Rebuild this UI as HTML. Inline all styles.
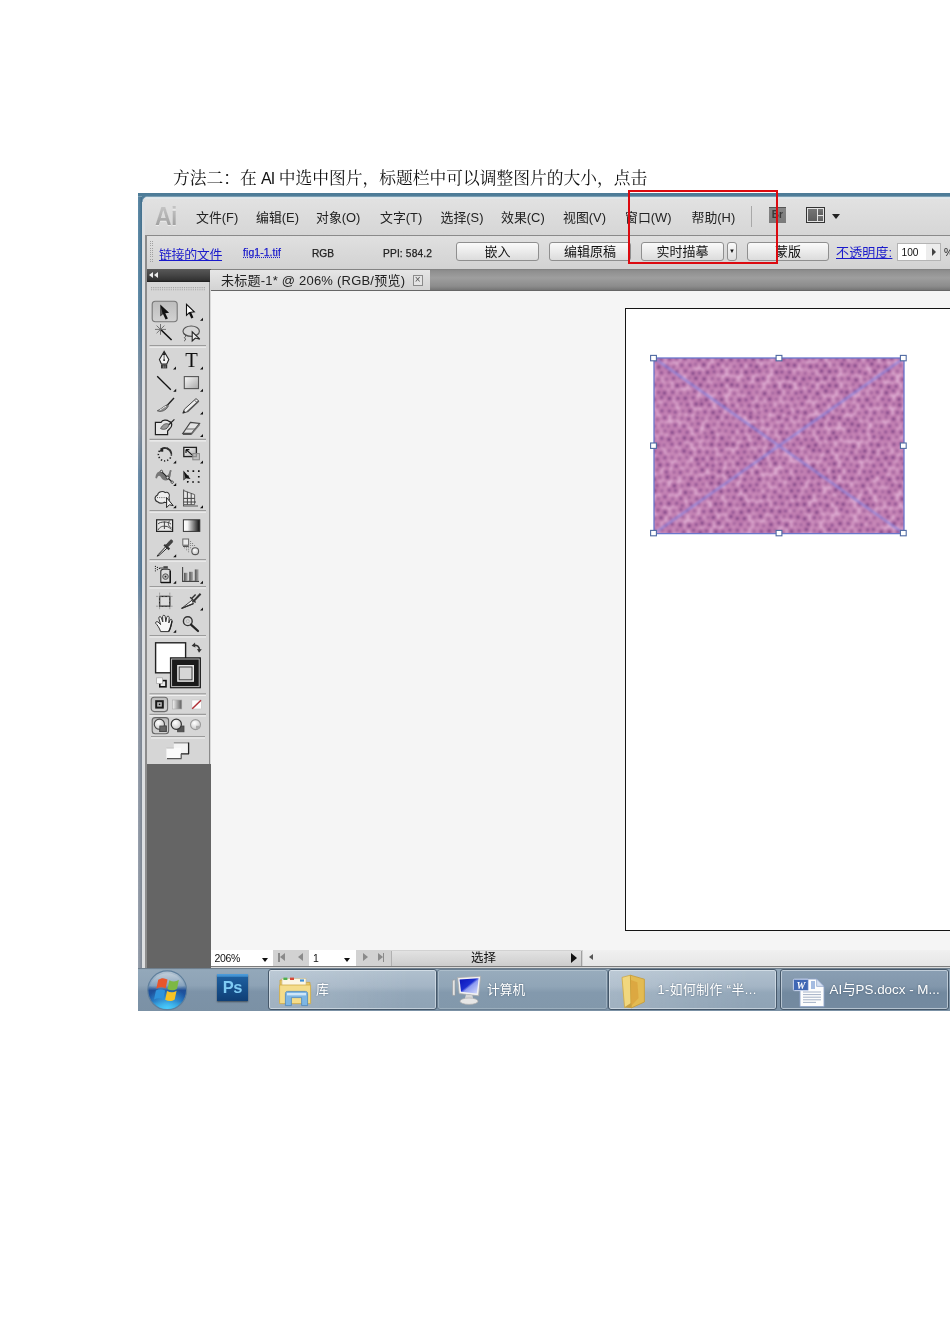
<!DOCTYPE html>
<html lang="zh-CN">
<head>
<meta charset="utf-8">
<title>AI与PS</title>
<style>
*{margin:0;padding:0;box-sizing:border-box}
html,body{width:950px;height:1344px;background:#fff;overflow:hidden}
body{position:relative;font-family:"Liberation Sans","Noto Sans CJK SC",sans-serif;color:#000}
.abs{position:absolute}
#para{will-change:transform;left:172.5px;top:167.4px;font-family:"Liberation Serif","Noto Serif CJK SC",serif;font-size:16.75px;line-height:24px;white-space:nowrap;color:#111}
#para .lat{font-family:"Liberation Sans",sans-serif;font-size:16px;letter-spacing:-.8px}
#shot{left:138px;top:193px;width:812px;height:818px;overflow:hidden;background:#d9d9d9;filter:blur(.42px)}
#shot .abs{position:absolute}
/* all coords inside #shot are relative to (138,193) */
#frameL{left:0;top:3.6px;width:7.2px;height:771.4px;background:linear-gradient(90deg,rgba(255,255,255,.12) 0,rgba(0,0,0,.1) 3.8px,#dcdfe2 4px,#dedfe1 7.2px),linear-gradient(180deg,#4a7c9c 0,#4f7f9f 14%,#8490a0 26%,#8a94a2 30%,#5f84a3 36%,#5a80a0 50%,#8892a0 56%,#8d97a5 100%)}
#frameL2{left:7.2px;top:42px;width:1.6px;height:733px;background:#8c8c8c}
#frameT{left:0;top:0;width:812px;height:6px;background:linear-gradient(180deg,#4c7b97 0,#4f7e9a 55%,#dbe5ea 66%,#e2e8ea 100%)}
#menubar{left:5px;top:4px;width:807px;height:38px;background:linear-gradient(180deg,#e2e2e2,#d6d6d6)}
.mi{position:absolute;top:13px;font-size:12.9px;line-height:16px;white-space:nowrap;color:#222}
#ctrl{left:8px;top:42px;width:804px;height:34px;background:linear-gradient(180deg,#e0e0e0,#d2d2d2);border-top:1px solid #8a8a8a;border-left:1px solid #8a8a8a}
.btn{position:absolute;top:49px;height:19px;border:1px solid #8f8f8f;border-radius:3px;background:linear-gradient(180deg,#fafafa,#dcdcdc);font-size:13px;line-height:18px;text-align:center;color:#111}
.lnk{color:#1a1acc;text-decoration:underline}
#darkbar{left:8px;top:76px;width:804px;height:12.6px;background:linear-gradient(180deg,#585858 0,#444 50%,#333 85%,#1c1c1c 100%)}
#tabstrip{left:73px;top:76px;width:739px;height:21.5px;background:linear-gradient(180deg,#7e7e7e 0,#8e8e8e 8%,#9e9e9e 40%,#8c8c8c 78%,#707070 100%)}
#tab{left:72px;top:76.5px;width:220px;height:21px;letter-spacing:.22px;background:linear-gradient(180deg,#e6e6e6,#d2d2d2);font-size:13px;line-height:21.5px;padding-left:11px;color:#222;white-space:nowrap}
#tools{left:8px;top:88.5px;width:64px;height:482.5px;background:#d6d6d6;border-right:1px solid #8a8a8a}
#toolsdark{left:8px;top:571px;width:64.5px;height:204px;background:#656565}
#canvas{left:72.5px;top:97px;width:740px;height:660px;background:#f5f5f5;border-top:1px solid #666}
#artboard{left:486.8px;top:114.8px;width:340px;height:623px;background:#fff;border:1.5px solid #151515}
#status{left:72.5px;top:756.8px;width:740px;height:17.5px;background:#d2d2d2;border-bottom:1.6px solid #7c7c7c}
.tdn{width:0;height:0;border:3.6px solid transparent;border-top:4.2px solid #111;border-bottom:0}
.nav{height:10px;white-space:nowrap;font-size:0}
.nav i{display:inline-block;vertical-align:top}
.nav .bar{width:1.5px;height:9px;background:#8a8a8a}
.nav .tl{width:0;height:0;border:4.5px solid transparent;border-right:5px solid #8a8a8a;border-left:0}
.nav .tr{width:0;height:0;border:4.5px solid transparent;border-left:5px solid #8a8a8a;border-right:0}
#ailogo{left:11.5px;top:5px;font-size:25.5px;line-height:28px;font-weight:bold;letter-spacing:-.5px;color:#b0b0b0;filter:drop-shadow(0 1px 0 #ececec);transform:scaleX(.9);transform-origin:left center;background:linear-gradient(180deg,#c2c2c2 20%,#a0a0a0 85%);-webkit-background-clip:text;background-clip:text;-webkit-text-fill-color:transparent}
#bricon{left:625.5px;top:10px;width:17.5px;height:15.5px;background:linear-gradient(180deg,#858585,#7a7a7a);border-top:1px solid #555;color:#3a3a3a;font-size:10px;line-height:14px;text-align:center;font-weight:bold}
#layicon{left:663px;top:10px;width:19px;height:16px;background:#e4e4e4;border:1px solid #333}
#layicon i{position:absolute;background:linear-gradient(180deg,#757575,#5e5e5e)}
#layicon i:nth-child(1){left:1px;top:1px;width:8.5px;height:12px}
#layicon i:nth-child(2){left:10.5px;top:1px;width:5.5px;height:5.5px}
#layicon i:nth-child(3){left:10.5px;top:7.5px;width:5.5px;height:5.5px}
#grip1{left:12px;top:48px;width:3.4px;height:22px;background:repeating-linear-gradient(180deg,#a0a0a0 0 1px,transparent 1px 2.2px);-webkit-mask:linear-gradient(90deg,#000 0 1.1px,transparent 1.1px 2.3px,#000 2.3px);mask:linear-gradient(90deg,#000 0 1.1px,transparent 1.1px 2.3px,#000 2.3px)}
#taskbar{left:0;top:774.6px;width:812px;height:43px;background:linear-gradient(180deg,#5e6d7a 0,#93a8ba 1.6px,#8ea3b6 40%,#7d93a8 55%,#7b91a5 100%);overflow:hidden}
#psicon{left:78.5px;top:6.6px;width:31.5px;height:27.2px;background:linear-gradient(180deg,#4f9edc 0,#3d8ccc 2.4px,#1d5e9e 3px,#0f3f76 100%);box-shadow:0 1px 1.5px rgba(0,0,0,.45);text-align:center;line-height:27px}
#psicon b{font-size:16.5px;color:#7fcbf4;letter-spacing:-.5px;font-weight:bold}
.tb{position:absolute;top:1.6px;height:40.6px;border-radius:3px;border:1px solid #46586a;box-shadow:inset 0 0 0 1px rgba(235,242,248,.55)}
.tb1{background:linear-gradient(90deg,rgba(255,255,255,.16),rgba(255,255,255,0) 85%),linear-gradient(180deg,#b0c0ce 0,#a4b5c5 42%,#93a7b9 58%,#8fa3b5 100%)}
.tb2{background:linear-gradient(180deg,#98acbd 0,#90a5b7 42%,#8399ad 58%,#8298ab 100%);border-color:#6a7f92;box-shadow:inset 0 0 0 1px rgba(235,242,248,.25)}
.tb3{background:linear-gradient(180deg,#8a9fb3 0,#8297ac 42%,#72899f 58%,#748aa0 100%)}
.tt{position:absolute;top:12px;font-size:12.8px;line-height:16px;color:#fff;white-space:nowrap;text-shadow:0 0 2px rgba(40,60,80,.6)}
</style>
</head>
<body>
<div id="para" class="abs">方法二：在 <span class="lat">AI</span> 中选中图片，标题栏中可以调整图片的大小，点击</div>

<div id="shot" class="abs">
  <div id="menubar" class="abs">
    <span class="abs" id="ailogo">Ai</span>
    <span class="mi" style="left:53px">文件(F)</span><span class="mi" style="left:113px">编辑(E)</span><span class="mi" style="left:173px">对象(O)</span><span class="mi" style="left:237px">文字(T)</span><span class="mi" style="left:297.5px">选择(S)</span><span class="mi" style="left:358px">效果(C)</span><span class="mi" style="left:420px">视图(V)</span><span class="mi" style="left:482px">窗口(W)</span><span class="mi" style="left:548.5px">帮助(H)</span>
    <span class="abs" style="left:607.5px;top:9px;width:1.5px;height:21px;background:#a8a8a8"></span>
    <span class="abs" id="bricon">Br</span>
    <span class="abs" id="layicon"><i></i><i></i><i></i></span>
    <span class="abs" style="left:688.5px;top:16.5px;width:0;height:0;border:4px solid transparent;border-top:5px solid #222;border-bottom:0"></span>
  </div>
  <div id="ctrl" class="abs"></div>
  <span class="abs" id="grip1"></span>
  <span class="abs lnk" style="left:21px;top:53.5px;font-size:13px;line-height:16px;letter-spacing:-.4px">链接的文件</span>
  <span class="abs lnk" style="left:105px;top:53px;font-size:10.4px;line-height:14px;text-decoration-style:dotted;letter-spacing:.1px;-webkit-text-stroke:.25px #1a1acc">fig1-1.tif</span>
  <span class="abs" style="left:174px;top:54px;font-size:10.2px;line-height:14px;color:#222;-webkit-text-stroke:.25px #222">RGB</span>
  <span class="abs" style="left:245px;top:54px;font-size:10.2px;line-height:14px;color:#222;letter-spacing:.15px;-webkit-text-stroke:.25px #222">PPI: 584.2</span>
  <span class="btn" style="left:318px;width:83px">嵌入</span>
  <span class="btn" style="left:411px;width:82px">编辑原稿</span>
  <span class="btn" style="left:503px;width:83px">实时描摹</span>
  <span class="btn" style="left:589px;width:10px;font-size:6px;line-height:16px">▼</span>
  <span class="btn" style="left:609px;width:82px">蒙版</span>
  <span class="abs lnk" style="left:698px;top:52px;font-size:13px;line-height:16px;letter-spacing:.15px">不透明度:</span>
  <span class="abs" style="left:758.5px;top:49.5px;width:44.5px;height:18.5px;background:linear-gradient(90deg,#fff 0,#fff 27.5px,#ededed 28px);border:1px solid #b4b4b4;font-size:10.2px;line-height:17px;padding-left:4px;color:#111">100</span>
  <span class="abs" style="left:793.5px;top:54.5px;width:0;height:0;border:4px solid transparent;border-left:4.5px solid #444;border-right:0"></span>
  <span class="abs" style="left:806px;top:52px;font-size:10.5px;line-height:14px;color:#222">%</span>
  <div id="darkbar" class="abs"></div>
  <div id="tabstrip" class="abs"></div>
  <div id="tab" class="abs">未标题-1* @ 206% (RGB/预览)<span class="abs" style="left:202.5px;top:5.5px;width:10.5px;height:10.5px;border:1px solid #8a8a8a;background:#e4e4e4;font-size:10px;line-height:8.5px;text-align:center;color:#555;letter-spacing:0">×</span></div>
  <div id="tools" class="abs"></div>
  <div id="toolsdark" class="abs"></div>
  <svg id="toolsvg" class="abs" style="left:8px;top:90px" width="64" height="483" viewBox="0 0 64 483">
<defs>
<linearGradient id="gSel" x1="0" y1="0" x2="0" y2="1"><stop offset="0" stop-color="#bdbdbd"/><stop offset="1" stop-color="#d2d2d2"/></linearGradient>
<linearGradient id="gRect" x1="0" y1="0" x2="1" y2="1"><stop offset="0" stop-color="#fafafa"/><stop offset="1" stop-color="#a8a8a8"/></linearGradient>
<linearGradient id="gBW" x1="0" y1="0" x2="1" y2="0"><stop offset="0" stop-color="#ffffff"/><stop offset=".25" stop-color="#f2f2f2"/><stop offset="1" stop-color="#0c0c0c"/></linearGradient>
<linearGradient id="gGr" x1="0" y1="0" x2="1" y2="0"><stop offset="0" stop-color="#f4f4f4"/><stop offset="1" stop-color="#5a5a5a"/></linearGradient>
<linearGradient id="gBar" x1="0" y1="0" x2="1" y2="0"><stop offset="0" stop-color="#555"/><stop offset="1" stop-color="#aaa"/></linearGradient>
<radialGradient id="gBall" cx=".4" cy=".35" r=".7"><stop offset="0" stop-color="#ffffff"/><stop offset="1" stop-color="#c4c4c4"/></radialGradient>
<path id="tri" d="M3,0 L3,3 L0,3 Z" fill="#111"/>
</defs>
<!-- grip -->
<g fill="#9c9c9c"><rect x="5" y="4" width="55" height="1.2" opacity=".0"/></g>
<path d="M5,4.6 H60 M5,6.8 H60" stroke="#a4a4a4" stroke-width="1.1" stroke-dasharray="1.1 1.1" fill="none"/>
<!-- separators -->
<g stroke-width="1.2">
<path d="M3.5,62.6 H60 M3.5,156.4 H60 M3.5,227.6 H60 M3.5,276.7 H60 M3.5,303.5 H60 M3.5,352.5 H60 M3.5,410.9 H60 M3.5,431.4 H60 M5,453.5 H59" stroke="#9b9b9b"/>
<path d="M3.5,64.1 H60 M3.5,157.9 H60 M3.5,229.1 H60 M3.5,278.2 H60 M3.5,305 H60 M3.5,354 H60 M3.5,412.4 H60 M3.5,432.9 H60 M5,455 H59" stroke="#f0f0f0"/>
</g>
<!-- row1: selection arrows -->
<rect x="6.2" y="18.3" width="25" height="20.5" rx="3.2" fill="url(#gSel)" stroke="#777" stroke-width="1.1"/>
<path d="M14.3,21.6 V33.6 L17,31 L19.6,36.6 L21.9,35.5 L19.3,30.2 L23.1,29.8 Z" fill="#111"/>
<path d="M14.6,23 V32.5 L16.6,30.4 Z" fill="#777" opacity=".7"/>
<path d="M40.5,21.3 V32.3 L43.2,29.8 L45,29.2 L48.3,28.8 Z" fill="#fff" stroke="#111" stroke-width="1.1" stroke-linejoin="miter"/>
<path d="M42.8,29.9 L45.3,35.5 L47.4,34.5 L45,29 Z" fill="#111"/>
<use href="#tri" x="54" y="34.8"/>
<!-- row2: wand, lasso -->
<g stroke="#555" stroke-width="1" fill="none">
<path d="M14.5,41 V51.8 M9,46.4 H20 M10.6,42.6 L18.4,50.2 M18.4,42.6 L10.6,50.2" stroke="#666" stroke-width=".9"/>
</g>
<path d="M15.2,47 L25.6,57" stroke="#111" stroke-width="1.6" fill="none"/>
<ellipse cx="45.2" cy="48.2" rx="8.2" ry="5.2" fill="none" stroke="#555" stroke-width="1.2"/>
<path d="M38.2,51 c2,1 2,2.5 .6,3.2 c-1.2,.8 1.4,1.2 .6,2.6 c-.5,1 -1.2,1 -1.2,1" fill="none" stroke="#444" stroke-width="1"/>
<path d="M46.2,48.9 V58 L49.4,55 L53.8,56.2 Z" fill="#eee" stroke="#222" stroke-width="1.1"/>
<!-- row3: pen, T -->
<path d="M18.1,68.4 L13.4,76.6 L15.4,81 H20.8 L22.8,76.6 Z" fill="#f4f4f4" stroke="#222" stroke-width="1.1"/>
<path d="M18.1,68.4 L16.6,72 H19.6 Z" fill="#222"/>
<path d="M18.1,72 V77" stroke="#333" stroke-width=".8"/><circle cx="18.1" cy="77.2" r=".9" fill="#222"/>
<rect x="15" y="81.4" width="6.2" height="4" fill="#333"/>
<path d="M17.3,82.4 V85.4 M19.1,82.4 V85.4" stroke="#aaa" stroke-width=".7"/>
<use href="#tri" x="27" y="83.4"/>
<text x="45.5" y="84" font-family="Liberation Serif,serif" font-size="20.5" text-anchor="middle" fill="#111">T</text>
<use href="#tri" x="54" y="83.4"/>
<!-- row4: line, rect -->
<path d="M11.2,93.2 L24.8,106.8" stroke="#111" stroke-width="1.3"/>
<use href="#tri" x="27.2" y="105.8"/>
<rect x="38.3" y="93.6" width="14.2" height="12" fill="url(#gRect)" stroke="#555" stroke-width="1.1"/>
<use href="#tri" x="54" y="105.8"/>
<!-- row5: brush, pencil -->
<path d="M28,115 L20.4,123.2" stroke="#222" stroke-width="1.4"/>
<path d="M21.6,121.8 C18,122.6 16.4,125.6 11.2,127.8 C14.6,129.4 19.8,128 22.4,123 Z" fill="#8a8a8a" stroke="#444" stroke-width=".7"/>
<path d="M20,123.4 C17.6,124 16,126.2 13.6,127.2" stroke="#eee" stroke-width="1" fill="none"/>
<path d="M50,115.6 L52.8,118 L41.2,128.8 L36.8,130.2 L38.4,126.2 Z" fill="#f0f0f0" stroke="#444" stroke-width="1"/>
<path d="M48.4,117.2 L51.2,119.6" stroke="#666" stroke-width="1"/>
<path d="M52.8,118 L41.2,128.8" stroke="#555" stroke-width="1.6"/>
<path d="M36.8,130.2 L39.4,129.4 L38,127.6 Z" fill="#222"/>
<use href="#tri" x="54" y="128.6"/>
<!-- row6: blob brush, eraser -->
<path d="M9.4,139.4 H15 C16.4,136.6 21,136.6 23,138.4 C26.8,139.4 26.4,143.6 23.4,146 L21.6,148 V151.6 H9.4 Z" fill="#e6e6e6" stroke="#222" stroke-width="1.2"/>
<path d="M28.4,136.4 L22.6,142" stroke="#222" stroke-width="1.2"/>
<path d="M22.8,141.2 C20,139.6 16.4,141.6 14.6,145.6 C18,147.4 22.6,146 22.8,141.2 Z" fill="#9a9a9a" stroke="#444" stroke-width=".8"/>
<path d="M44.4,139.4 L53.6,140.4 L45.6,150.4 H36.8 Z" fill="#e4e4e4" stroke="#444" stroke-width="1.1"/>
<path d="M40.2,146 H49 " stroke="#666" stroke-width="1"/>
<path d="M53.6,140.4 V142.6 L45.6,152 V150.4 Z" fill="#777"/>
<path d="M36.8,150.4 H45.6 V152 H36.8 Z" fill="#555"/>
<use href="#tri" x="54" y="151"/>
<!-- row7: rotate, scale -->
<circle cx="18.9" cy="171.4" r="6.5" fill="none" stroke="#222" stroke-width="1.5" stroke-dasharray="1.3 1.9"/>
<path d="M14.6,166.6 A6.5,6.5 0 0 1 25.3,170.4" fill="none" stroke="#333" stroke-width="1.8"/>
<path d="M12.8,168.4 L17.4,164.2 L17.2,168.8 Z" fill="#222"/>
<use href="#tri" x="27.2" y="177.4"/>
<rect x="37.8" y="164.4" width="12.6" height="9.2" fill="url(#gRect)" stroke="#222" stroke-width="1.3"/>
<path d="M40,166.6 L47,172.6 M40,166.6 V170 M40,166.6 H43.4" stroke="#111" stroke-width="1.2" fill="none"/>
<rect x="46.8" y="170.6" width="6.6" height="6.2" fill="#bbb" fill-opacity=".7" stroke="#888" stroke-width="1"/>
<use href="#tri" x="54" y="177.4"/>
<!-- row8: width/warp, free transform -->
<path d="M9.4,195 C10,188 15,187 17,190.6 C19,194.6 22.4,193.4 23.4,188.4 C23.8,186.6 25.4,186.6 25.8,188 C24.6,188.6 25.2,190.6 24.6,193 C23.4,198.4 17.4,198.8 15.4,195 C13.6,191.6 11.8,192.4 11,195.6 Z" fill="#777"/>
<path d="M15,188 L27,200" stroke="#222" stroke-width="1.1"/>
<circle cx="15.4" cy="188.4" r="1.2" fill="#ddd" stroke="#222" stroke-width=".7"/><circle cx="21.6" cy="194.6" r="1.4" fill="#ddd" stroke="#222" stroke-width=".7"/><circle cx="26.2" cy="199.2" r="1.2" fill="#ddd" stroke="#222" stroke-width=".7"/>
<use href="#tri" x="27.2" y="200"/>
<rect x="41.8" y="188.2" width="11" height="10.8" fill="none" stroke="#111" stroke-width="1.7" stroke-dasharray="1.7 3.8" stroke-dashoffset=".8"/>
<path d="M37.4,187.4 V197.6 L40,195.2 L44.6,196 Z" fill="#111"/>
<path d="M37.8,189 V196.4 L39.4,194.8 Z" fill="#888" opacity=".8"/>
<!-- row9: shape builder, perspective grid -->
<path d="M12,219 C8.4,218 8,213.4 11.6,212 C12,208.6 17,207.4 19.2,209.6 C22,208.4 24.6,211.6 23,214.4 C24.4,217.4 21.4,220.4 18.4,219.2 C16.4,220.6 13.4,220.4 12,219 Z" fill="#eee" stroke="#333" stroke-width="1.1"/>
<path d="M11,214.6 H21" stroke="#555" stroke-width="1" stroke-dasharray="1 1.2"/>
<path d="M20.6,214.6 V224.6 L23.4,221.8 L27.2,222.6 Z" fill="#f4f4f4" stroke="#222" stroke-width="1"/>
<use href="#tri" x="27.2" y="222.2"/>
<path d="M37.6,206.4 V223 H52 " stroke="#555" stroke-width="1.2" fill="none"/>
<path d="M37.6,207.6 L48.6,211.6 V221.6 H37.6 Z" fill="#e8e8e8" stroke="#555" stroke-width=".9"/>
<path d="M41.4,208.8 V221.6 M45.2,210.2 V221.6 M37.6,215.4 H48.6 M37.6,219 H50" stroke="#444" stroke-width="1" fill="none"/>
<path d="M38,223 H51.6" stroke="#999" stroke-width="1"/>
<use href="#tri" x="54" y="222.2"/>
<!-- row10: mesh, gradient -->
<rect x="10.6" y="236.8" width="16" height="11.6" fill="#e8e8e8" stroke="#222" stroke-width="1.2"/>
<path d="M18.4,238.4 V246 M12,241 C14,238.4 22.6,238.2 25,241.2 M12,247 C14,243.4 17,243 18.4,243.4 C20.4,243 23,243.6 25.4,246.6 M23.6,237.6 C21.6,240.6 22,243 25.6,245" fill="none" stroke="#444" stroke-width="1"/>
<rect x="37.4" y="236.8" width="16.4" height="11.6" fill="url(#gBW)" stroke="#333" stroke-width="1"/>
<!-- row11: eyedropper, blend -->
<path d="M20.2,263.2 L12.4,271.4 L11.2,273.2 L13,272.4 L21.6,264.6 Z" fill="#eee" stroke="#222" stroke-width="1"/>
<path d="M18.2,261.8 L23.4,266.4" stroke="#333" stroke-width="2.2"/>
<path d="M20,262 L24.2,257.4 C25.6,256 27.4,257.8 26.2,259.4 L22,263.8 Z" fill="#444" stroke="#333" stroke-width=".8"/>
<use href="#tri" x="27.2" y="271.2"/>
<rect x="36.8" y="256" width="5.8" height="6.2" fill="#ececec" stroke="#666" stroke-width="1"/>
<path d="M37,263.4 H42.8" stroke="#555" stroke-width="1.2"/>
<g fill="#666"><circle cx="44.6" cy="258.4" r=".5"/><circle cx="44.6" cy="260.4" r=".5"/><circle cx="44.6" cy="262.4" r=".5"/><circle cx="46.6" cy="260.4" r=".5"/><circle cx="46.6" cy="262.4" r=".5"/><circle cx="48.6" cy="262.4" r=".5"/><circle cx="38.6" cy="264.8" r=".5"/><circle cx="40.6" cy="264.8" r=".5"/><circle cx="42.6" cy="264.8" r=".5"/><circle cx="40.6" cy="266.8" r=".5"/><circle cx="42.6" cy="266.8" r=".5"/><circle cx="42.6" cy="268.8" r=".5"/><circle cx="44.6" cy="264.8" r=".5"/></g>
<circle cx="49.2" cy="268.2" r="3.4" fill="url(#gBall)" stroke="#555" stroke-width="1.1"/>
<!-- row12: spray, graph -->
<g fill="#222"><circle cx="9.4" cy="283.4" r=".6"/><circle cx="9.4" cy="285.6" r=".6"/><circle cx="9.4" cy="287.8" r=".6"/><circle cx="11.4" cy="284.4" r=".6"/><circle cx="11.4" cy="286.6" r=".6"/><circle cx="13.4" cy="285.4" r=".6"/></g>
<path d="M13.6,285 H17.6" stroke="#333" stroke-width=".9"/>
<rect x="17.4" y="283.2" width="4.4" height="2.4" fill="#444"/>
<path d="M14.8,288.4 C14.8,286.6 16.4,286.2 17.6,286.2 H22 C23.6,286.2 24.4,287.2 24.4,288.6 V299.4 H14.8 Z" fill="#ddd" stroke="#333" stroke-width="1.1"/>
<path d="M24.2,288 V299.6 H15" stroke="#111" stroke-width="1.4" fill="none"/>
<circle cx="19.5" cy="293.6" r="2.8" fill="#bbb" stroke="#555" stroke-width="1"/><circle cx="19.5" cy="293.6" r=".9" fill="#222"/>
<use href="#tri" x="27.2" y="297.8"/>
<path d="M36.6,284 V298.4 H53" stroke="#444" stroke-width="1.1" fill="none"/>
<rect x="38" y="289.8" width="3.6" height="8.2" fill="url(#gBar)"/><rect x="43.2" y="288.8" width="3.8" height="9.2" fill="url(#gBar)"/><rect x="48.8" y="286.4" width="3.8" height="11.6" fill="url(#gBar)"/>
<use href="#tri" x="54" y="297.8"/>
<!-- row13: artboard, slice -->
<rect x="13.6" y="313.4" width="10.2" height="9.8" fill="#dcdcdc" stroke="#222" stroke-width="1.3"/>
<path d="M13.6,309.6 V327 M23.8,309.6 V327 M10,313.4 H27.4 M10,323.2 H27.4" stroke="#888" stroke-width=".7" stroke-dasharray="2.2 1.4" fill="none"/>
<path d="M54.6,310.8 L47.2,318.6" stroke="#333" stroke-width="2"/>
<path d="M49.6,311.6 L45.6,315.6" stroke="#333" stroke-width="1.4"/>
<path d="M44.2,314.2 L49.6,319.4" stroke="#333" stroke-width="1.4"/>
<path d="M46,317.2 L35.6,325.4 L47.4,320.6 Z" fill="#f0f0f0" stroke="#333" stroke-width=".9"/>
<path d="M35.6,325.4 L47.4,320.6" stroke="#333" stroke-width="1.4"/>
<use href="#tri" x="54" y="324.4"/>
<!-- row14: hand, zoom -->
<path d="M14.6,348.6 C13.6,345 11,341.6 9.6,340.2 C9.4,338.4 11.6,338 13,339.8 L14.6,341.6 L12.8,335.2 C12.6,333.4 14.8,333 15.4,334.8 L16.8,339 L16.6,333.6 C16.8,331.8 19,331.8 19.2,333.6 L19.8,338.8 L20.8,334.2 C21.2,332.6 23.2,333 23.2,334.6 L22.8,340 L24,337 C24.8,335.6 26.4,336.4 26,338 C25.2,342 24.6,345.6 22.6,348.6 Z" fill="#f6f6f6" stroke="#333" stroke-width="1"/>
<path d="M22.6,348.6 C24.6,345.6 25.2,342 26,338" stroke="#222" stroke-width="1.4" fill="none"/>
<use href="#tri" x="27.2" y="346.8"/>
<circle cx="41.8" cy="338.2" r="4.4" fill="#d8d8d8" stroke="#333" stroke-width="1.4"/>
<circle cx="41.8" cy="338.2" r="1.6" fill="none" stroke="#aaa" stroke-width=".7"/>
<path d="M45,341.6 L52,348" stroke="#222" stroke-width="2.2" stroke-linecap="round"/>
<!-- fill / stroke -->
<rect x="9.6" y="359.8" width="30" height="30" fill="#fff" stroke="#222" stroke-width="1.4"/>
<rect x="24.4" y="374.8" width="30" height="30" fill="#1a1a1a" stroke="#1a1a1a" stroke-width="1"/>
<rect x="25.6" y="376" width="27.6" height="27.6" fill="none" stroke="#c8c8c8" stroke-width=".9"/>
<rect x="31.8" y="382.6" width="15.6" height="15.6" fill="#d6d6d6" stroke="#e6e6e6" stroke-width="1.2"/>
<rect x="33.2" y="384" width="12.8" height="12.8" fill="#d6d6d6" stroke="#333" stroke-width=".9"/>
<path d="M47.4,362.4 C51,361.4 53.6,364 53.4,367" fill="none" stroke="#333" stroke-width="1.5"/>
<path d="M45.6,362.8 L49,359.4 L49.4,364.4 Z" fill="#333"/><path d="M51,366 L55.8,366.2 L53,369.8 Z" fill="#333"/>
<rect x="13.8" y="397.6" width="6.2" height="6.2" fill="#e8e8e8" stroke="#111" stroke-width="1.6"/>
<rect x="10.6" y="394.8" width="5.8" height="5.6" fill="#fafafa" stroke="#aaa" stroke-width=".8"/>
<!-- colour row -->
<rect x="5.2" y="414.2" width="16.4" height="14.4" rx="3" fill="url(#gSel)" stroke="#6e6e6e" stroke-width="1.1"/>
<rect x="9.2" y="417.2" width="8.6" height="8.4" fill="#1a1a1a"/>
<rect x="11.2" y="419.2" width="4.6" height="4.4" fill="#bbb"/><rect x="12.8" y="420.6" width="1.5" height="1.5" fill="#111"/>
<rect x="26.6" y="417" width="9.2" height="9" fill="url(#gGr)" stroke="#aaa" stroke-width=".6"/>
<rect x="45.8" y="417" width="9.6" height="9" fill="#fdfdfd" stroke="#c8c8c8" stroke-width=".7"/>
<path d="M46.2,425.8 L55,417.2" stroke="#b03036" stroke-width="1.5"/>
<!-- draw mode row -->
<rect x="6.2" y="434.6" width="16.4" height="16.2" rx="3" fill="url(#gSel)" stroke="#666" stroke-width="1.1"/>
<rect x="13.8" y="443" width="6.4" height="5.6" fill="#666" stroke="#444" stroke-width=".8"/>
<circle cx="13.4" cy="441.2" r="5.1" fill="url(#gBall)" stroke="#444" stroke-width="1.1"/>
<rect x="13.8" y="443" width="6.4" height="5.6" fill="#666" stroke="#444" stroke-width=".8"/>
<rect x="31.6" y="443" width="6.4" height="5.8" fill="#555" stroke="#444" stroke-width=".8"/>
<circle cx="30.3" cy="441.2" r="5.1" fill="url(#gBall)" stroke="#333" stroke-width="1.2"/>
<circle cx="49.5" cy="441.6" r="5" fill="url(#gBall)" stroke="#9a9a9a" stroke-width="1.1"/>
<rect x="50" y="442.8" width="3.4" height="3" fill="#aaa"/>
<!-- screen mode -->
<rect x="27.8" y="459.6" width="14.6" height="11" fill="#f4f4f4"/>
<path d="M27.8,459.8 H42.4" stroke="#999" stroke-width="1.4"/><path d="M42.6,459.6 V471 M28.4,470.8 H43" stroke="#222" stroke-width="1.3" fill="none"/>
<rect x="20.4" y="464.8" width="14.6" height="10.6" fill="#fafafa"/>
<path d="M20.4,465 H27.8" stroke="#bbb" stroke-width="1"/><path d="M35.2,470.8 V475.6 M21,475.6 H35.6" stroke="#555" stroke-width="1.2" fill="none"/>
</svg>
  <span class="abs" style="left:11px;top:79px;width:0;height:0;border:3px solid transparent;border-right:4px solid #eee;border-left:0"></span><span class="abs" style="left:15.5px;top:79px;width:0;height:0;border:3px solid transparent;border-right:4px solid #eee;border-left:0"></span>
  <div id="canvas" class="abs"></div>
  <div id="artboard" class="abs"></div>
  <svg id="tissue" class="abs" style="left:511.9px;top:160.7px" width="258" height="184" viewBox="-4 -4 258 184">
<defs>
<filter id="soft" x="0" y="0" width="1" height="1"><feGaussianBlur stdDeviation=".8"/></filter>
<clipPath id="imgclip"><rect x="0" y="0" width="250" height="175.6"/></clipPath>
<path id="cA" d="M183.1,145.1h0M126.3,127.3h0M6.9,27.8h0M45.5,15.1h0M7.5,39.4h0M128.0,67.8h0M96.7,7.4h0M31.5,13.0h0M121.3,145.4h0M150.4,107.6h0M139.6,86.7h0M241.4,146.1h0M149.4,139.9h0M17.9,86.3h0M106.2,147.9h0M44.3,65.7h0M208.7,48.1h0M12.1,167.5h0M25.6,180.9h0M203.2,108.1h0M4.1,152.1h0M53.9,28.2h0M4.8,34.5h0M38.3,26.4h0M124.9,164.9h0M61.5,27.5h0M235.9,105.7h0M15.3,132.3h0M0.4,93.1h0M192.6,128.0h0M33.4,152.6h0M96.1,127.6h0M122.3,159.2h0M182.7,92.1h0M137.9,41.0h0M65.4,86.8h0M204.8,42.1h0M252.6,42.1h0M209.7,73.2h0M174.7,42.0h0M39.5,172.4h0M91.5,1.8h0M147.7,100.7h0M144.2,132.8h0M146.1,26.3h0M231.7,74.0h0M192.6,139.4h0M53.6,1.0h0M29.6,26.2h0M36.9,146.2h0M12.4,114.1h0M36.6,94.9h0M38.5,-0.4h0M110.1,152.6h0M29.6,173.9h0M45.2,93.7h0M132.7,61.6h0M43.2,59.7h0M128.2,145.7h0M188.7,134.5h0M74.7,132.7h0M171.6,139.3h0M197.0,52.5h0M-1.0,80.8h0M40.7,33.5h0M197.6,94.6h0M18.2,166.2h0M210.2,113.8h0M228.8,41.3h0M95.1,47.6h0M87.5,100.3h0M162.7,8.0h0M164.5,74.4h0M154.8,113.6h0M244.1,161.0h0M87.2,7.4h0M57.2,139.7h0M198.2,13.9h0M158.3,81.7h0M187.1,151.6h0M217.7,61.3h0M26.9,140.6h0M220.6,54.9h0M21.5,132.5h0M213.7,171.9h0M30.0,68.3h0M240.0,86.4h0M66.1,53.5h0M200.7,113.3h0M96.7,55.0h0M204.7,1.9h0M7.9,52.9h0M112.1,52.7h0M178.0,167.2h0M15.4,53.1h0M27.8,7.2h0M224.1,101.5h0M26.0,85.6h0M26.3,114.6h0M192.9,101.0h0M243.4,54.5h0M143.5,93.4h0M191.4,40.0h0M132.9,75.1h0M2.0,2.2h0M91.0,105.8h0M72.6,59.2h0M83.3,27.4h0M21.1,67.3h0M133.3,139.7h0M164.7,126.1h0M79.1,154.2h0M242.0,28.4h0M28.3,147.5h0M84.6,2.4h0M231.2,8.7h0M158.8,119.7h0M227.3,106.9h0M112.3,146.5h0M83.3,172.4h0M219.3,171.5h0M251.1,67.9h0M129.7,81.3h0M133.1,48.3h0M144.6,1.9h0M190.3,65.9h0M249.7,105.7h0M167.6,80.1h0M67.1,145.8h0M45.8,160.5h0M34.6,61.1h0M0.8,26.8h0M79.8,139.5h0M165.7,92.4h0M45.8,121.4h0M221.4,133.2h0M97.0,107.4h0M99.8,132.1h0M42.1,126.7h0M127.9,14.1h0M217.3,86.6h0M107.3,173.4h0M71.7,99.7h0M7.4,14.8h0M143.5,81.2h0M131.5,153.1h0M98.3,146.8h0M158.7,28.3h0M205.6,13.6h0M160.4,159.8h0M176.0,66.2h0M36.1,7.2h0M179.3,180.6h0M59.5,79.9h0M205.9,172.4h0M216.5,113.8h0M18.7,34.3h0M33.3,46.7h0M155.5,33.2h0M203.8,79.7h0M65.6,34.9h0M82.5,53.4h0M55.5,166.7h0M52.4,172.9h0M231.1,112.6h0M147.0,85.5h0M238.3,140.1h0M25.8,73.3h0M150.8,67.5h0M136.3,147.1h0M88.0,112.7h0M64.2,6.4h0M115.2,80.7h0M231.6,47.1h0M118.8,100.3h0M94.2,20.5h0M134.8,55.0h0M75.9,118.9h0M170.3,46.5h0M238.3,127.3h0M219.8,107.9h0M224.3,8.5h0M42.5,72.5h0M129.7,1.4h0M83.1,14.0h0M150.8,120.0h0M83.9,94.8h0M120.9,134.0h0M247.4,100.8h0M105.6,13.0h0M15.2,14.4h0M212.1,54.4h0M6.8,145.5h0M219.8,26.6h0M201.8,60.7h0M98.8,13.5h0M211.4,15.5h0M159.2,132.3h0M248.5,61.7h0M90.5,80.3h0M227.0,27.9h0M234.8,80.5h0M22.1,108.2h0M10.8,59.7h0M247.8,113.9h0M159.1,-0.4h0M145.0,172.7h0M136.5,0.0h0M96.1,72.9h0M205.6,146.1h0M165.5,132.5h0M15.7,1.1h0M49.0,100.9h0M188.9,53.3h0M149.7,74.3h0M228.7,94.7h0M53.1,94.3h0M205.7,120.5h0M98.5,28.8h0M159.0,68.0h0M217.0,46.6h0M105.8,93.1h0M194.5,20.6h0M193.0,153.7h0M239.4,32.7h0M113.1,66.6h0M68.9,173.8h0M22.7,145.2h0M24.1,40.4h0M67.6,92.5h0M209.8,141.2h0M121.1,120.7h0M235.6,68.1h0M98.1,40.1h0M218.3,118.5h0M58.9,107.8h0M59.9,132.7h0M126.2,87.4h0M218.0,179.2h0M228.6,119.5h0M90.5,94.0h0M147.2,34.1h0M167.2,1.2h0M184.7,45.9h0M232.0,153.7h0M39.1,39.7h0M238.3,20.5h0M60.1,13.7h0M0.3,41.5h0M78.7,74.1h0M187.5,33.9h0M92.0,41.9h0M220.0,78.9h0M211.9,134.7h0M246.7,153.5h0M207.4,166.9h0M109.1,181.0h0M143.7,53.9h0M42.2,166.6h0M111.6,8.8h0M196.0,133.0h0M247.1,74.4h0M193.9,61.8h0M219.0,147.0h0M42.5,179.2h0M68.3,66.2h0M11.5,46.8h0M169.9,112.0h0M190.6,119.7h0M49.7,139.9h0M55.3,47.1h0M102.9,151.7h0M73.2,166.9h0M51.0,54.0h0M75.9,172.1h0M13.6,106.8h0M136.9,158.4h0M223.3,34.2h0M141.6,59.5h0M225.6,20.5h0M52.4,79.0h0M90.4,54.3h0M7.0,1.3h0M166.2,146.0h0M162.6,61.2h0M82.3,119.8h0M82.8,67.7h0M142.0,113.4h0M6.5,95.0h0M95.1,35.0h0M252.1,81.8h0M53.0,120.0h0M174.0,54.3h0M66.7,106.2h0M86.7,166.5h0M109.2,20.5h0M182.7,0.4h0M2.9,127.5h0M181.9,172.4h0M58.8,9.0h0M22.8,13.6h0M168.2,28.8h0M42.8,140.7h0M201.9,72.8h0M235.2,145.5h0M177.6,99.8h0M223.8,114.7h0M190.1,1.8h0M10.9,99.8h0M160.5,147.6h0M235.2,42.0h0M87.9,179.0h0M218.4,73.3h0M90.8,121.4h0M248.8,21.6h0M142.1,35.3h0M46.5,132.2h0M195.0,113.0h0M75.8,66.7h0M172.7,119.0h0M157.2,127.4h0M148.1,45.9h0M88.0,73.3h0M142.3,178.4h0M244.1,173.8h0M249.4,55.3h0M67.8,13.6h0M190.1,106.8h0M155.9,20.1h0M87.8,88.1h0M214.1,2.0h0M206.2,28.1h0M134.1,179.6h0M21.2,54.3h0M33.1,74.3h0M135.5,14.4h0M103.7,59.5h0M101.2,85.7h0M53.2,106.9h0M217.1,99.5h0M3.4,101.4h0M171.2,101.1h0M147.7,125.7h0M7.7,80.4h0M93.6,114.9h0M127.6,52.8h0M194.3,165.5h0M201.2,179.4h0M212.5,160.7h0M22.4,0.1h0M227.4,68.3h0M185.2,113.1h0M19.6,20.3h0M119.9,52.6h0M132.4,113.2h0M88.5,128.1h0M49.7,153.6h0M10.9,138.9h0M129.9,105.3h0M166.2,174.2h0M102.7,126.7h0M44.2,106.0h0M243.9,120.1h0M234.0,158.7h0M26.9,151.6h0M151.7,81.5h0M136.0,92.7h0M78.7,47.5h0M246.8,85.7h0M15.6,173.5h0M169.8,59.6h0M200.8,32.7h0M79.7,113.5h0M215.9,140.2h0M181.9,13.2h0"/>
<path id="cB" d="M230.7,179.2h0M41.7,113.9h0M47.1,42.0h0M233.6,92.5h0M68.7,160.5h0M199.7,48.8h0M166.9,52.4h0M79.1,99.4h0M171.7,167.1h0M152.3,133.5h0M59.1,94.4h0M121.3,68.1h0M48.4,60.5h0M118.4,139.4h0M43.9,55.1h0M37.2,134.6h0M190.2,171.4h0M239.7,46.1h0M72.8,6.6h0M163.0,180.1h0M170.9,152.0h0M231.6,86.6h0M65.5,72.3h0M16.5,160.4h0M5.0,180.0h0M110.8,48.0h0M243.4,13.1h0M38.1,66.2h0M247.1,179.3h0M125.7,48.1h0M202.6,167.3h0M23.2,172.0h0M198.4,0.3h0M45.4,79.1h0M141.5,99.1h0M185.4,138.9h0M226.3,146.2h0M113.6,132.7h0M33.0,88.4h0M242.7,79.0h0M15.2,92.5h0M141.6,166.0h0M176.8,87.0h0M36.9,107.3h0M125.9,99.9h0M8.7,67.7h0M22.2,93.5h0M196.2,147.0h0M199.1,26.5h0M187.9,20.9h0M191.8,27.9h0M122.3,41.0h0M97.8,94.3h0M66.7,121.4h0M227.6,160.0h0M105.3,28.3h0M79.6,22.0h0M197.0,106.7h0M186.0,178.3h0M225.4,74.7h0M225.9,138.9h0M179.2,47.8h0M139.6,73.5h0M7.8,132.8h0M190.9,13.0h0M77.3,13.7h0M180.1,6.9h0M157.4,52.5h0M11.2,72.9h0M27.1,45.9h0M248.0,166.0h0M71.8,72.9h0M209.7,179.2h0M137.8,79.0h0M71.5,152.3h0M50.5,86.4h0M141.0,47.4h0M149.6,61.2h0M220.5,159.9h0M112.0,105.9h0M232.1,59.2h0M18.7,141.0h0M241.4,132.2h0M160.4,172.7h0M186.5,86.8h0M18.6,47.5h0M34.1,35.1h0M12.7,21.1h0M79.3,60.2h0M125.8,20.0h0M166.1,159.7h0M83.2,146.8h0M211.8,28.4h0M94.4,166.4h0M111.1,59.2h0M136.9,107.7h0M96.0,138.6h0M25.8,19.6h0M163.1,99.8h0M28.0,127.7h0M110.3,112.1h0M109.7,74.8h0M114.5,28.7h0M0.9,160.6h0M51.1,75.2h0M206.0,159.2h0M48.9,126.2h0M178.4,141.3h0M99.6,79.0h0M169.8,87.7h0M217.1,126.9h0M27.9,60.2h0M10.2,87.1h0M20.2,114.2h0M29.2,106.1h0M209.5,88.1h0M118.9,7.3h0M-1.1,55.3h0M19.8,153.3h0M143.4,107.7h0M102.8,34.2h0M242.9,92.7h0M113.4,0.9h0M175.3,106.1h0M182.7,52.4h0M97.5,120.6h0M211.4,80.3h0M-0.1,171.5h0M102.9,139.4h0M231.1,139.9h0M64.0,140.1h0M155.7,74.7h0M144.1,15.3h0M240.0,154.1h0M8.4,172.3h0M228.6,133.8h0M144.2,67.4h0M116.6,112.6h0M0.5,68.2h0M124.7,179.0h0M53.1,132.4h0M119.5,94.5h0M134.5,127.9h0M202.2,128.1h0M217.1,153.3h0M200.1,153.3h0M239.0,8.2h0M136.3,67.3h0M126.8,114.4h0M182.8,161.0h0M77.2,41.1h0M177.7,152.5h0M251.3,145.6h0M100.1,173.3h0M62.0,41.3h0M3.1,73.5h0M54.4,159.5h0M105.1,66.5h0M32.8,99.4h0M65.1,46.8h0M164.6,138.4h0M71.2,33.0h0M23.3,80.8h0M127.3,92.9h0M26.8,35.3h0M212.4,107.0h0M159.5,40.1h0M18.1,99.5h0M153.3,26.2h0M210.0,153.0h0M130.3,158.2h0M172.1,125.2h0M129.3,132.5h0M80.4,8.6h0M187.5,99.2h0M-1.4,14.8h0M56.4,60.3h0M140.3,152.7h0M116.6,47.3h0M35.6,20.0h0M91.3,171.8h0M170.6,74.3h0M29.0,159.0h0M29.0,53.0h0M14.4,68.2h0M130.9,40.4h0M156.5,99.2h0M3.3,166.6h0M5.7,119.1h0M86.4,61.4h0M134.1,34.7h0M119.2,125.2h0M3.4,61.4h0M170.8,179.6h0M30.2,119.9h0M11.5,180.1h0M183.6,41.2h0M108.7,85.7h0M118.1,74.4h0M190.9,79.3h0M186.5,75.0h0M49.7,179.4h0M192.3,88.1h0M144.5,40.2h0M217.5,34.8h0M80.3,165.5h0M220.0,39.5h0M203.5,133.2h0M242.5,66.8h0M-2.1,106.5h0M104.9,54.7h0M190.2,92.5h0M94.1,98.9h0M109.6,167.8h0M118.7,61.8h0M211.1,66.9h0M56.1,180.5h0M129.2,119.7h0M4.4,140.9h0M149.6,180.7h0M251.2,-0.4h0M196.8,41.0h0M21.8,159.6h0M178.9,126.1h0M194.4,47.5h0M162.1,166.9h0M51.1,147.4h0M131.8,100.9h0M147.2,154.0h0M243.6,107.2h0M133.4,86.4h0M216.7,19.5h0M151.4,94.0h0M72.7,125.3h0M3.9,48.0h0M225.3,154.5h0M216.4,165.0h0M14.2,27.7h0M104.5,132.5h0M106.9,40.7h0M223.7,46.3h0M224.4,180.6h0M35.0,180.8h0M100.1,159.2h0M229.3,15.5h0M19.6,9.1h0M175.4,134.5h0M189.1,159.0h0M231.8,19.5h0M128.3,174.3h0M40.4,152.9h0M41.4,6.3h0M83.5,79.7h0M75.9,52.5h0M75.5,106.7h0M65.0,100.9h0M126.5,8.6h0M25.6,100.6h0M224.9,125.9h0M75.1,79.5h0M10.2,126.3h0M35.3,139.4h0M89.2,22.3h0M74.7,95.0h0M121.2,81.8h0M147.7,113.5h0M118.8,35.1h0M33.4,112.7h0M239.4,114.3h0M209.9,59.6h0M176.4,0.5h0M209.4,7.5h0M205.2,55.3h0M246.5,7.5h0M58.1,33.2h0M3.2,111.9h0M87.9,33.8h0M113.2,120.8h0M200.4,138.5h0M206.0,93.8h0M4.3,21.6h0M149.5,7.8h0M90.2,66.6h0M114.4,161.0h0M103.0,166.6h0M173.8,159.8h0M50.0,34.4h0M224.0,166.6h0M58.3,111.9h0M151.2,15.3h0M38.8,158.7h0M225.3,60.4h0M147.1,166.7h0M79.2,126.5h0M20.9,120.0h0M196.5,161.0h0M73.6,139.1h0M167.5,107.7h0M232.4,125.7h0M210.8,21.3h0M87.6,47.2h0M155.2,48.0h0M197.0,79.1h0M180.7,66.0h0M158.7,15.7h0M80.2,35.5h0M248.4,33.4h0M122.9,1.3h0M121.1,172.1h0M245.3,-0.3h0M228.2,53.9h0M197.6,173.4h0M221.6,67.8h0M178.0,33.7h0M250.3,93.6h0M209.4,35.5h0M60.2,66.3h0M20.4,59.2h0M118.8,21.6h0M166.3,40.6h0M110.7,128.0h0M62.2,0.6h0M42.2,86.5h0M230.3,165.3h0M64.5,21.3h0M113.0,13.5h0M45.0,146.4h0M58.4,20.6h0"/>
<path id="cC" d="M154.3,166.3h0M114.7,93.6h0M219.5,94.1h0M15.0,81.4h0M126.2,138.7h0M59.1,54.6h0M106.6,105.6h0M140.6,126.4h0M194.5,7.7h0M107.6,0.4h0M92.0,14.2h0M227.9,79.7h0M140.4,20.6h0M76.9,1.5h0M102.8,114.3h0M162.8,154.3h0M137.6,173.3h0M30.4,80.0h0M83.8,105.7h0M12.8,9.0h0M198.0,65.9h0M198.0,120.6h0M188.0,6.3h0M6.0,107.1h0M163.5,35.5h0M42.1,46.1h0M232.3,34.8h0M238.9,73.4h0M117.7,152.8h0M213.6,146.8h0M235.3,174.1h0M132.5,166.8h0M65.6,152.3h0M72.0,180.1h0M144.2,120.3h0M63.9,178.7h0M136.0,28.7h0M64.7,164.9h0M227.3,173.9h0M154.7,88.2h0M99.1,1.2h0M46.2,174.3h0M144.0,159.0h0M217.8,6.1h0M201.8,100.1h0M47.5,46.1h0M162.1,113.5h0M68.0,80.2h0M98.7,68.4h0M18.0,180.4h0M143.1,146.4h0M0.8,132.7h0M58.7,119.4h0M201.1,7.8h0M35.2,167.7h0M72.9,85.9h0M106.6,158.3h0M210.8,92.9h0M121.2,105.4h0M59.3,159.5h0M130.9,27.9h0M96.4,59.1h0M137.5,132.8h0M151.8,-0.2h0M49.8,6.7h0M102.7,180.1h0M124.8,34.4h0M87.1,141.1h0M110.6,35.4h0M122.5,14.2h0M103.8,21.8h0M94.9,152.7h0M208.9,98.9h0M182.1,27.7h0M150.7,160.8h0M150.5,146.2h0M48.1,165.0h0M233.6,54.8h0M77.8,26.8h0M36.0,52.9h0M154.8,152.4h0M91.6,132.6h0M87.2,154.3h0M192.9,34.2h0M240.1,165.6h0M173.6,93.4h0M161.6,87.0h0M73.6,114.5h0M175.8,80.5h0M250.8,160.2h0M156.4,8.6h0M61.9,173.4h0M31.3,40.3h0M234.9,28.9h0M180.4,105.8h0M89.9,146.5h0M115.7,41.1h0M155.6,180.8h0M133.9,6.8h0M245.0,41.2h0M171.9,32.9h0M101.2,99.3h0M120.9,28.0h0M57.3,125.2h0M173.2,147.6h0M178.9,59.7h0M109.2,100.5h0M15.4,40.6h0M57.6,86.4h0M58.0,100.6h0M175.5,27.5h0M57.3,153.1h0M194.8,72.9h0M65.4,113.3h0M20.3,127.8h0M90.4,160.6h0M46.4,26.9h0M182.3,79.4h0M237.6,0.0h0M231.9,99.9h0M37.3,120.6h0M202.1,22.1h0M239.5,60.9h0M13.6,118.9h0M-0.4,146.5h0M83.3,160.4h0M140.5,7.3h0M39.0,15.3h0M165.9,118.7h0M75.9,146.5h0M116.8,86.7h0M171.0,7.8h0M175.6,13.6h0M185.9,128.1h0M235.3,121.4h0M65.1,125.3h0M235.1,134.1h0M220.3,1.1h0M229.9,1.3h0M181.7,132.0h0M163.2,21.3h0M164.1,48.3h0M117.0,166.5h0M70.4,47.8h0M239.0,99.5h0M34.4,126.4h0M220.7,13.2h0M105.0,80.2h0M209.0,127.8h0M50.1,20.9h0M18.2,74.5h0M252.5,173.4h0M76.9,158.4h0M125.8,153.5h0M175.1,171.5h0M234.5,12.8h0M52.2,41.7h0M115.1,172.8h0M157.4,61.9h0M82.1,132.5h0M91.7,28.3h0M3.9,87.2h0M213.4,120.9h0M67.1,133.5h0M7.0,159.8h0M240.2,180.0h0M152.3,171.5h0M31.4,134.4h0M42.8,101.2h0M53.6,14.5h0M61.6,145.9h0M179.9,21.1h0M179.4,74.8h0M251.3,133.3h0M245.9,127.9h0M23.2,27.6h0M63.6,59.3h0M155.3,138.9h0M141.3,138.5h0M251.9,27.7h0M149.5,21.1h0M159.2,107.8h0M185.6,60.1h0M180.4,119.6h0M0.1,121.3h0M79.1,86.5h0M151.2,54.8h0M37.8,80.9h0M251.4,14.1h0M4.9,9.0h0M30.0,92.9h0M102.6,8.8h0M53.7,68.0h0M45.0,1.6h0M94.3,180.4h0M103.1,48.1h0M26.3,167.0h0M102.3,72.6h0M105.3,121.2h0M248.3,141.0h0M224.2,86.9h0M11.0,154.2h0M79.8,178.9h0M133.1,19.5h0M124.9,59.5h0M179.4,113.4h0M213.0,41.8h0M204.3,67.5h0M159.5,92.2h0M151.3,39.2h0M48.2,112.1h0M171.2,19.9h0M67.6,41.4h0M186.1,165.5h0M10.4,35.0h0M199.5,88.2h0M41.9,20.3h0M67.8,27.0h0M126.8,74.2h0M110.1,138.7h0M189.2,146.2h0M58.1,74.6h0M30.9,0.2h0M167.2,66.8h0M167.5,12.9h0M73.3,22.1h0M249.5,120.3h0M67.8,1.8h0M14.9,145.4h0M93.5,86.7h0M135.8,120.4h0M245.6,46.9h0M85.4,42.0h0M117.1,179.7h0M193.4,180.2h0"/>
</defs>
<g clip-path="url(#imgclip)">
<rect x="0" y="0" width="250" height="175.6" fill="#dcaad0"/>
<g filter="url(#soft)" fill="none" stroke-linecap="round">
<use href="#cA" stroke="#bf7cb0" stroke-width="7.8"/><use href="#cB" stroke="#c382b3" stroke-width="7.5"/><use href="#cC" stroke="#bb78ad" stroke-width="8"/>
<use href="#cA" stroke="#b570a8" stroke-width="4.1"/><use href="#cB" stroke="#b976ab" stroke-width="3.7"/><use href="#cC" stroke="#b06ba4" stroke-width="4.3"/>
<use href="#cA" stroke="#7a4489" stroke-width="2.6"/><use href="#cB" stroke="#885093" stroke-width="2.1"/><use href="#cC" stroke="#733d82" stroke-width="3"/>
<path d="M0,0 L250,175.6 M250,0 L0,175.6" stroke="#8687e2" stroke-width="2.3" opacity=".7"/>
</g>
</g>
<g fill="none" stroke="#6f7bd0">

<rect x="0" y="0" width="250" height="175.6" stroke-width="1.3" stroke="#6a76cc"/>
</g>
<g fill="#fff" stroke="#4f6aa2" stroke-width="1.1">
<rect x="-3.4" y="-2.6" width="5.8" height="5.4"/><rect x="122.1" y="-2.6" width="5.8" height="5.4"/><rect x="246.4" y="-2.6" width="5.8" height="5.4"/>
<rect x="-3.4" y="85" width="5.8" height="5.4"/><rect x="246.4" y="85" width="5.8" height="5.4"/>
<rect x="-3.4" y="172.4" width="5.8" height="5.4"/><rect x="122.1" y="172.4" width="5.8" height="5.4"/><rect x="246.4" y="172.4" width="5.8" height="5.4"/>
</g>
</svg>
  <div id="status" class="abs">
    <span class="abs" style="left:0;top:0;width:62px;height:16px;background:#fff;font-size:10.5px;line-height:16px;padding-left:4px;letter-spacing:-.3px;color:#111">206%</span>
    <span class="abs tdn" style="left:51px;top:8px"></span>
    <span class="abs nav" style="left:67.5px;top:3px"><i class="bar"></i><i class="tl"></i></span>
    <span class="abs nav" style="left:87px;top:3px"><i class="tl"></i></span>
    <span class="abs" style="left:98.5px;top:0;width:46.5px;height:16px;background:#fff;font-size:10.5px;line-height:16px;padding-left:4px;color:#111">1</span>
    <span class="abs tdn" style="left:133px;top:8px"></span>
    <span class="abs nav" style="left:152px;top:3px"><i class="tr"></i></span>
    <span class="abs nav" style="left:167px;top:3px"><i class="tr"></i><i class="bar"></i></span>
    <span class="abs" style="left:180.5px;top:1px;width:191px;height:15px;background:linear-gradient(180deg,#e2e2e2,#cdcdcd);border-left:1px solid #b0b0b0;border-right:1px solid #a0a0a0;font-size:12.5px;line-height:15px;color:#111;text-align:center;padding-right:6px">选择</span>
    <span class="abs" style="left:360px;top:3.5px;width:0;height:0;border:5px solid transparent;border-left:6.5px solid #111;border-right:0"></span>
    <span class="abs" style="left:372px;top:0;width:368px;height:16px;background:linear-gradient(180deg,#f0f0f0,#e6e6e6)"></span>
    <span class="abs" style="left:378.5px;top:4.5px;width:0;height:0;border:3px solid transparent;border-right:4.5px solid #555;border-left:0"></span>
  </div>
  <div id="taskbar" class="abs">
    <svg class="abs" style="left:8px;top:1px" width="42" height="42" viewBox="0 0 42 42">
      <defs>
        <linearGradient id="orb" x1="0" y1="0" x2="0" y2="1"><stop offset="0" stop-color="#b4c4d2"/><stop offset=".38" stop-color="#7e9cb8"/><stop offset=".5" stop-color="#1f4f98"/><stop offset=".78" stop-color="#1b5cae"/><stop offset="1" stop-color="#2fb4ea"/></linearGradient>
        <radialGradient id="orbglow" cx=".5" cy="1" r=".6"><stop offset="0" stop-color="#4fd0ff" stop-opacity=".9"/><stop offset="1" stop-color="#4fd0ff" stop-opacity="0"/></radialGradient>
        <linearGradient id="orbhi" x1="0" y1="0" x2="0" y2="1"><stop offset="0" stop-color="#fff" stop-opacity=".75"/><stop offset="1" stop-color="#fff" stop-opacity=".08"/></linearGradient>
      </defs>
      <circle cx="21.2" cy="21.3" r="19.4" fill="url(#orb)" stroke="#5f7f9c" stroke-width="1.2"/>
      <circle cx="21.2" cy="21.3" r="18.8" fill="url(#orbglow)"/>
      <path d="M4,17 A18,18 0 0 1 38.4,17 C30,22 12,22 4,17 Z" fill="url(#orbhi)" opacity=".3"/>
      <g transform="translate(20.8 20.6) scale(1.16) translate(-19.6 -21)"><path d="M12.2,12.6 C15,10.6 17.6,10.8 20.2,12.4 L18.6,20 C16,18.6 13.4,18.6 10.6,20.2 Z" fill="#e8552b"/>
      <path d="M21.8,12.9 C24.6,14.4 27.2,14.4 30,12.6 L28.4,20.2 C25.6,22 23,21.8 20.2,20.4 Z" fill="#7db844"/>
      <path d="M10.2,21.8 C13,20.2 15.6,20.4 18.2,21.8 L16.6,29.4 C14,28 11.4,28 8.6,29.6 Z" fill="#2f93dc"/>
      <path d="M19.8,22.3 C22.6,23.8 25.2,23.8 28,22 L26.4,29.6 C23.6,31.4 21,31.2 18.2,29.8 Z" fill="#f7c325"/></g>
    </svg>
    <div class="abs" id="psicon"><b>Ps</b></div>
    <div class="tb tb1" style="left:129.5px;width:169.5px">
      <svg class="abs" style="left:9px;top:5px" width="36" height="33" viewBox="0 0 36 33">
        <path d="M2,5 H12 L14,7.4 H32 V27 H2 Z" fill="#e9c866" stroke="#c9a23c" stroke-width=".8"/>
        <rect x="4" y="3.4" width="24" height="8" fill="#fbf6e4" stroke="#c8b98a" stroke-width=".6"/>
        <rect x="5.4" y="2.6" width="4" height="2.4" fill="#4caf50"/><rect x="12" y="2.6" width="4" height="2.4" fill="#d84a38"/><rect x="22" y="4.4" width="4" height="2.2" fill="#3f8fd8"/>
        <path d="M1.6,10 H32.6 V28.6 H1.6 Z" fill="#f4dc8a" stroke="#d1ab45" stroke-width=".8"/>
        <path d="M7.4,30.6 V18.6 C7.4,17 8.4,16.4 9.6,16.4 H27.4 C28.8,16.4 29.6,17.2 29.6,18.6 V30.6 H23.6 V22.6 H13.4 V30.6 Z" fill="#7db6e4" stroke="#4c86bc" stroke-width=".8"/>
        <path d="M9,18 H28 V20.4 H9 Z" fill="#cfe6f8"/>
      </svg>
      <span class="tt" style="left:47.5px">库</span>
    </div>
    <div class="tb tb2" style="left:298.5px;width:171px">
      <svg class="abs" style="left:11px;top:5px" width="36" height="32" viewBox="0 0 36 32">
        <path d="M3.6,5.4 L6,4.6 V20.6 L3.6,20.2 Z" fill="#e8e8e8" stroke="#999" stroke-width=".6"/>
        <path d="M8.6,2.6 L31.6,1.2 L29.6,20.8 L10.2,18.6 Z" fill="#f2f2f2" stroke="#aaa" stroke-width=".8"/>
        <defs><linearGradient id="scr" x1="0" y1="0" x2="1" y2="1"><stop offset="0" stop-color="#0a14b8"/><stop offset=".45" stop-color="#1c2ed0"/><stop offset=".55" stop-color="#8e9cf0"/><stop offset="1" stop-color="#d8defc"/></linearGradient></defs>
        <path d="M10.6,4.4 L29.6,3.2 L27.8,18.6 L12,16.8 Z" fill="url(#scr)"/>
        <path d="M17,19.6 L23.4,20.2 L24.6,25 H15.4 Z" fill="#d6d6d6"/>
        <ellipse cx="20" cy="26.2" rx="9" ry="3.2" fill="#e6e6e6" stroke="#aaa" stroke-width=".7"/>
      </svg>
      <span class="tt" style="left:49.5px">计算机</span>
    </div>
    <div class="tb tb1" style="left:469.5px;width:169.5px">
      <svg class="abs" style="left:11px;top:3.5px" width="28" height="36" viewBox="0 0 28 36">
        <path d="M2,3.4 L10.4,1.2 L11.2,29.2 L4.6,33.6 Z" fill="#f1d77e" stroke="#cfa843" stroke-width=".8"/>
        <path d="M10.4,1.2 L24.4,5.2 V28 L11.2,34 Z" fill="#e3bb52" stroke="#c79a34" stroke-width=".8"/>
        <path d="M11,6 L17.4,8.2 L18.6,24 L11.2,32 Z" fill="#d9a23c" opacity=".75"/>
        <path d="M4.6,33.6 L11.2,29.2 L11.2,34 Z" fill="#c9a040"/>
      </svg>
      <span class="tt" style="left:49px;letter-spacing:.45px">1-如何制作&nbsp;“半...</span>
    </div>
    <div class="tb tb3" style="left:642px;width:169.4px">
      <svg class="abs" style="left:11px;top:5.5px" width="36" height="33" viewBox="0 0 36 33">
        <path d="M8,3 H24.6 L32,10.4 V30.6 H8 Z" fill="#fdfdfd" stroke="#8ea4c8" stroke-width=".9"/>
        <path d="M24.6,3 V10.4 H32 Z" fill="#d5e0f2" stroke="#8ea4c8" stroke-width=".7"/>
        <path d="M11,16 H29 M11,18.6 H29 M11,21.2 H29 M11,23.8 H29 M11,26.4 H24" stroke="#9aa8c0" stroke-width=".9"/>
        <rect x="1.4" y="3.2" width="15" height="11.4" rx="1" fill="#3f67b4" stroke="#c8d4ec" stroke-width="1"/>
        <text x="9" y="12.6" font-family="Liberation Serif,serif" font-size="10" font-weight="bold" font-style="italic" text-anchor="middle" fill="#fff">W</text>
        <rect x="19" y="5" width="4" height="8" fill="#7f9fd4" opacity=".7"/>
      </svg>
      <span class="tt" style="left:48.5px;font-size:13.4px">AI与PS.docx - M...</span>
    </div>
  </div>
  <div id="frameT" class="abs"></div>
  <div id="frameL" class="abs"></div>
  <div id="frameL2" class="abs"></div>
  <div class="abs" style="left:3.6px;top:3.4px;width:6px;height:6px;background:radial-gradient(circle at 100% 100%,rgba(79,126,154,0) 5px,#7fa0b6 5.6px,#4f7e9a 6.4px)"></div>
</div>

<div id="redbox" class="abs" style="left:628px;top:190px;width:150px;height:73.6px;border:2px solid #dc0a10"></div>
</body>
</html>
